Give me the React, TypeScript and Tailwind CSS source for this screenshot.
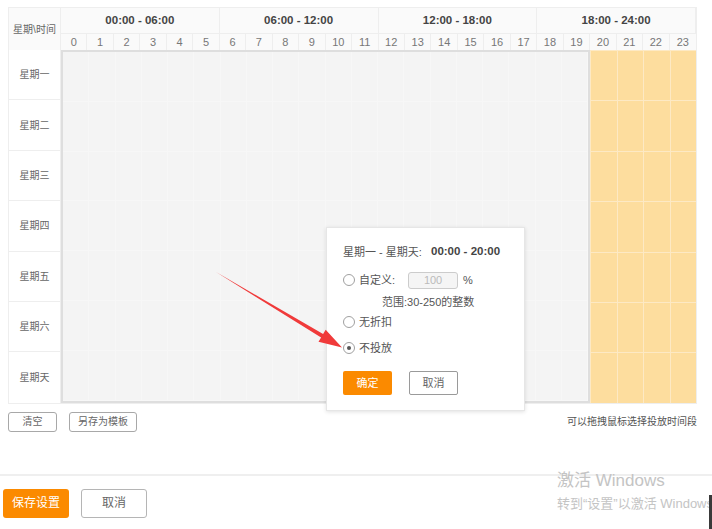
import React from 'react';

const days = ['星期一', '星期二', '星期三', '星期四', '星期五', '星期六', '星期天'];
const groups = ['00:00 - 06:00', '06:00 - 12:00', '12:00 - 18:00', '18:00 - 24:00'];
const hours = Array.from({ length: 24 }, (_, i) => i);

const font = { fontFamily: '"Liberation Sans", "Noto Sans CJK SC", sans-serif' };

const Radio = ({ checked, label }: { checked?: boolean; label: string }) => (
  <div className="flex items-center h-4">
    <span className="w-[12px] h-[12px] rounded-full border border-[#a0a0a0] bg-white flex items-center justify-center">
      {checked && <span className="w-[4px] h-[4px] rounded-full bg-[#555]" />}
    </span>
    <span className="ml-[4px] text-[11px] text-[#555]">{label}</span>
  </div>
);

const ScheduleTable = () => (
  <div className="w-[689px] border border-[#eee]">
    <div className="grid grid-cols-[52px_repeat(24,minmax(0,1fr))] bg-[#fafafa]">
      <div className="row-span-2 flex items-center justify-center border-r border-[#eee] text-[10px] text-[#666]">
        星期\时间
      </div>
      {groups.map(g => (
        <div
          key={g}
          className="col-span-6 h-[26px] flex items-center justify-center border-r border-b border-[#eee] last:border-r-0 font-bold text-[11.5px] text-[#444]"
        >
          {g}
        </div>
      ))}
      {hours.map(h => (
        <div key={h} className="h-[16px] flex items-center justify-center border-r border-[#eee] last:border-r-0 text-[11px] text-[#777]">
          {h}
        </div>
      ))}
    </div>

    <div className="flex">
      <div className="w-[52px] flex flex-col border-r border-[#eee] bg-white">
        {days.map(d => (
          <div key={d} className="h-[50.4px] flex items-center justify-center border-b border-[#eee] last:border-b-0 text-[10px] text-[#666]">
            {d}
          </div>
        ))}
      </div>
      <div className="flex flex-1">
        <div className="w-5/6 border-2 border-[#dedede] bg-[#f4f4f4] grid grid-cols-20 grid-rows-7">
          {Array.from({ length: 140 }, (_, i) => (
            <div key={i} className="border-r border-b border-[#f7f7f7]" />
          ))}
        </div>
        <div className="flex-1 grid grid-cols-4 grid-rows-7 bg-[#fddd9e]">
          {Array.from({ length: 28 }, (_, i) => (
            <div key={i} className="border-l border-t border-[#fde9c4]" />
          ))}
        </div>
      </div>
    </div>
  </div>
);

const Popover = () => (
  <div className="absolute left-[326px] top-[227px] w-[199px] h-[184px] bg-white border border-[#e6e6e6] shadow-[0_1px_4px_rgba(0,0,0,0.12)] pl-[16px] pt-[16px]">
    <div className="flex items-center h-4">
      <span className="w-[88px] text-[11px] text-[#555]">星期一 - 星期天:</span>
      <span className="font-bold text-[11.5px] text-[#444]">00:00 - 20:00</span>
    </div>
    <div className="flex items-center h-[18px] mt-[11px]">
      <Radio label="自定义:" />
      <div className="ml-[13px] w-[50px] h-[17px] rounded-[3px] border border-[#ccc] bg-[#f5f5f5] flex items-center justify-center text-[11px] text-[#bbb]">
        100
      </div>
      <span className="ml-[5px] text-[11px] text-[#555]">%</span>
    </div>
    <div className="h-4 mt-[5px] pl-[39px] flex items-center text-[11px] text-[#555]">范围:30-250的整数</div>
    <div className="mt-[4px]">
      <Radio label="无折扣" />
    </div>
    <div className="mt-[10px]">
      <Radio checked label="不投放" />
    </div>
    <div className="flex mt-[15px] gap-[17px]">
      <button className="w-[49px] h-[24px] rounded-[2px] bg-[#fb8a00] text-white text-[11px]">确定</button>
      <button className="w-[49px] h-[24px] rounded-[2px] border border-[#9a9a9a] bg-white text-[#666] text-[11px]">取消</button>
    </div>
  </div>
);

const Arrow = () => (
  <svg className="absolute left-0 top-0 pointer-events-none" width="712" height="529">
    <polygon
      points="216,272 323.1,334 325.7,329.7 342,347.5 318.5,341.7 321.1,337.4"
      fill="#f03a3a"
    />
  </svg>
);

export default function App() {
  return (
    <div className="relative w-[712px] h-[529px] overflow-hidden bg-white" style={font}>
      <div className="pl-[8px] pt-[7px] w-[697px]">
        <ScheduleTable />
        <div className="flex items-center mt-[8px]">
          <button className="w-[49px] h-[20px] rounded-[3px] border border-[#a8a8a8] bg-white text-[10px] text-[#666]">清空</button>
          <button className="ml-[12px] w-[68px] h-[20px] rounded-[3px] border border-[#a8a8a8] bg-white text-[10px] text-[#666]">另存为模板</button>
          <span className="ml-auto text-[10px] text-[#555]">可以拖拽鼠标选择投放时间段</span>
        </div>
      </div>
      <div className="mt-[42px] h-[2px] bg-[#efefef]" />
      <div className="flex pl-[3px] mt-[13px] gap-[12px]">
        <button className="w-[66px] h-[29px] rounded-[3px] bg-[#fb8a00] text-white text-[12px]">保存设置</button>
        <button className="w-[66px] h-[29px] rounded-[3px] border border-[#b5b5b5] bg-white text-[#666] text-[12px]">取消</button>
      </div>

      <Popover />
      <Arrow />

      <div className="absolute left-[557px] top-[470px] whitespace-nowrap text-[#c4c4c4] pointer-events-none">
        <div className="text-[17px] leading-[22px]">激活 Windows</div>
        <div className="text-[13px] leading-[16px] mt-[4px]">转到“设置”以激活 Windows。</div>
      </div>
      <div className="absolute right-0 top-[495px] w-[3px] h-[34px] bg-[#3a3a3a]" />
    </div>
  );
}
